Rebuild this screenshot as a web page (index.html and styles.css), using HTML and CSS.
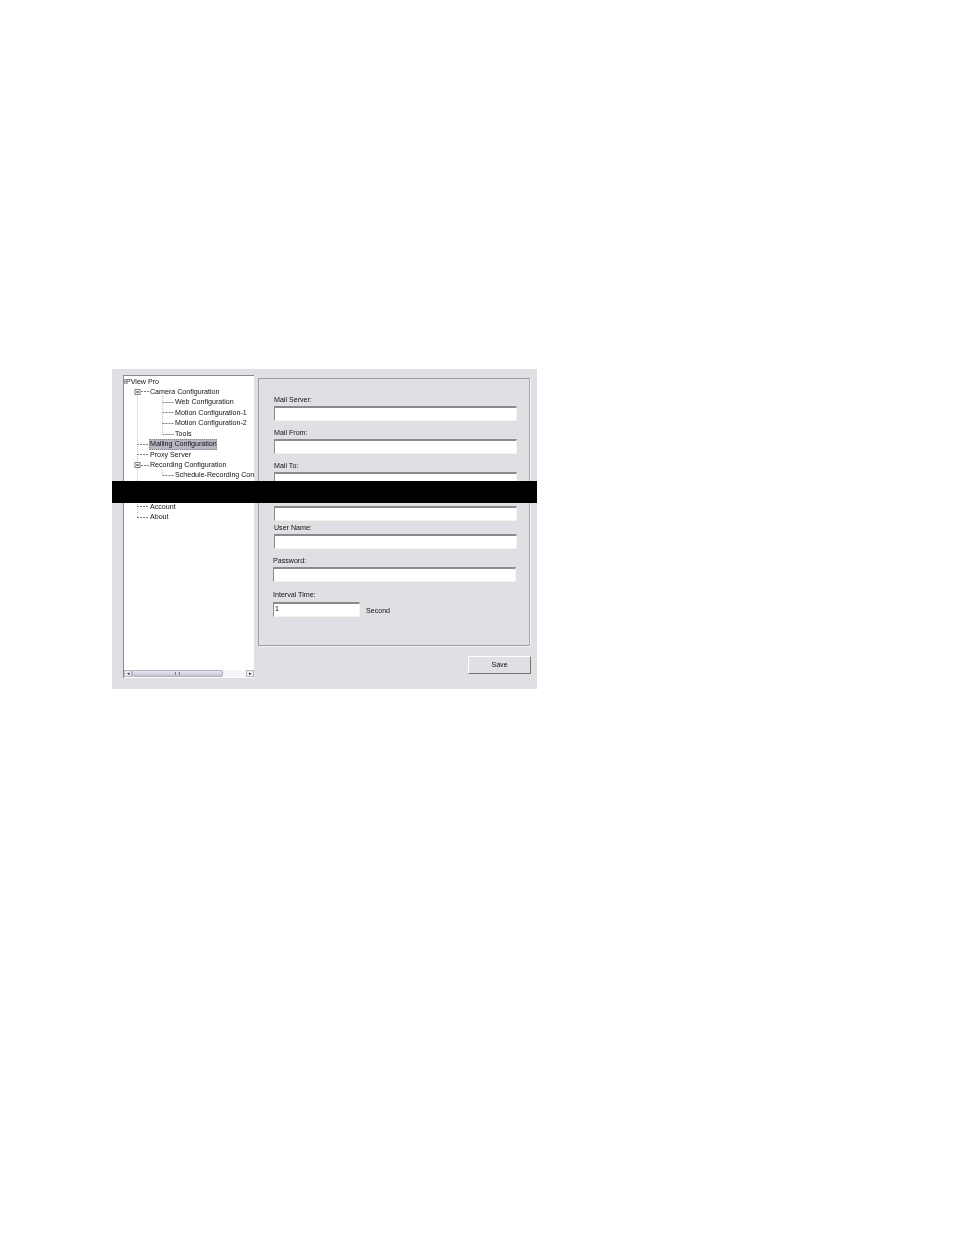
FILE: index.html
```html
<!DOCTYPE html>
<html lang="en">
<head>
    <meta charset="UTF-8">
    <title>IPView Pro</title>
    <link rel="stylesheet" href="styles.css">
</head>
<body>
    <div class="window">
        <div class="tree">
            <div class="tree-rows">
                <div class="row lvl0">IPView Pro</div>
                <div class="row lvl1">Camera Configuration</div>
                <div class="row lvl2">Web Configuration</div>
                <div class="row lvl2">Motion Configuration-1</div>
                <div class="row lvl2">Motion Configuration-2</div>
                <div class="row lvl2">Tools</div>
                <div class="row lvl1"><span class="selected">Mailing Configuration</span></div>
                <div class="row lvl1">Proxy Server</div>
                <div class="row lvl1">Recording Configuration</div>
                <div class="row lvl2">Schedule-Recording Con</div>
                <div class="row"></div>
                <div class="row"></div>
                <div class="row lvl1">Account</div>
                <div class="row lvl1">About</div>
            </div>
            <svg class="tree-lines" width="130" height="150" viewBox="0 0 130 150">
                <g stroke="#c4c4c4" stroke-width="1" stroke-dasharray="1 1" fill="none">
                    <path d="M13.5 20V141"/>
                    <path d="M38.5 20V58"/>
                    <path d="M38.5 94V100"/>
                </g>
                <g stroke="#7c7c7c" stroke-width="1" stroke-dasharray="2 1" fill="none">
                    <path d="M17 15.5H25"/>
                    <path d="M38.5 26.5H50"/>
                    <path d="M38.5 36.5H50"/>
                    <path d="M38.5 47.5H50"/>
                    <path d="M38.5 58.5H50"/>
                    <path d="M13 68.5H25"/>
                    <path d="M13 78.5H25"/>
                    <path d="M17 89.5H25"/>
                    <path d="M38.5 99.5H50"/>
                    <path d="M13 130.5H25"/>
                    <path d="M13 141.5H25"/>
                </g>
                <g stroke="#808080" fill="#fff">
                    <rect x="11" y="13.5" width="5" height="5"/>
                    <rect x="11" y="86.5" width="5" height="5"/>
                </g>
                <path d="M12 16H15M12 89H15" stroke="#222"/>
            </svg>
            <div class="hscroll">
                <div class="arrow">&#9666;</div>
                <div class="thumb"><span class="grip"></span></div>
                <div class="track"></div>
                <div class="arrow">&#9656;</div>
            </div>
        </div>
        <div class="right">
            <div class="group">
                <div class="field">
                    <label>Mail Server:</label>
                    <div class="input"></div>
                </div>
                <div class="field">
                    <label>Mail From:</label>
                    <div class="input"></div>
                </div>
                <div class="field gap-wide">
                    <label>Mail To:</label>
                    <div class="input"></div>
                </div>
                <div class="field gap-tight">
                    <label></label>
                    <div class="input"></div>
                </div>
                <div class="field">
                    <label>User Name:</label>
                    <div class="input"></div>
                </div>
                <div class="field gap-wide2">
                    <label class="shift">Password:</label>
                    <div class="input shift"></div>
                </div>
                <div class="field">
                    <label class="shift">Interval Time:</label>
                    <div class="interval">
                        <div class="input short">1</div>
                        <span class="unit">Second</span>
                    </div>
                </div>
            </div>
            <div class="actions">
                <div class="btn">Save</div>
            </div>
        </div>
        <div class="redact"></div>
    </div>
</body>
</html>
```

FILE: styles.css
```css
body {
    margin: 0;
    background-color: #fff;
    font-family: "Liberation Sans", Arial, sans-serif;
    font-size: 7.1px;
    color: #111;
    padding: 369px 0 0 112px;
}
.window {
    position: relative;
    width: 425px;
    height: 320px;
    background-color: #e0dfe3;
    display: flex;
    box-sizing: border-box;
    padding: 6px 7px 0 11px;
}
.tree {
    position: relative;
    width: 131px;
    height: 303px;
    box-sizing: border-box;
    background-color: #fff;
    border-top: 1px solid #8a8a8a;
    border-left: 1px solid #8a8a8a;
    display: flex;
    flex-direction: column;
    overflow: hidden;
    filter: blur(0.35px);
}
.tree-rows {
    flex: 1;
    padding-top: 0.5px;
}
.row {
    height: 10.45px;
    line-height: 10.45px;
    white-space: nowrap;
}
.lvl1 {
    padding-left: 26px;
}
.lvl2 {
    padding-left: 51px;
}
.selected {
    display: inline-block;
    margin-left: -1px;
    padding-left: 1px;
    background-color: #b8b8c4;
    outline: 1px dotted #888;
    outline-offset: -1px;
    color: #111;
}
.tree-lines {
    position: absolute;
    top: 0;
    left: 0;
}
.hscroll {
    height: 7px;
    display: flex;
    margin-bottom: 1px;
    background-color: #f6f6f8;
}
.arrow {
    width: 8px;
    background-color: #eeeef0;
    border: 1px solid #b4b4bc;
    box-sizing: border-box;
    font-size: 5px;
    line-height: 5px;
    text-align: center;
    color: #222;
}
.thumb {
    width: 91px;
    box-sizing: border-box;
    background: linear-gradient(#e6e6ee, #c4c6d4);
    border: 1px solid #b0b0bc;
    border-radius: 2px;
    display: flex;
    justify-content: center;
    align-items: center;
}
.grip {
    width: 3px;
    height: 3px;
    border-left: 1px solid #777;
    border-right: 1px solid #777;
}
.track {
    flex: 1;
}
.right {
    margin-left: 4px;
    flex: 1;
    display: flex;
    flex-direction: column;
}
.group {
    margin-top: 3px;
    height: 268px;
    box-sizing: border-box;
    border: 1px solid #9c9ca2;
    border-right-color: #a8a8ae;
    box-shadow: 1px 1px 0 #f4f4f6;
    padding: 15px 12px 0 15px;
    filter: blur(0.35px);
}
.field {
    margin-bottom: 6px;
}
.field label {
    display: block;
    height: 12px;
    line-height: 13px;
}
.input {
    width: 243px;
    height: 15px;
    box-sizing: border-box;
    background-color: #fff;
    border-top: 2px solid #8a8a8a;
    border-left: 1px solid #8a8a8a;
    border-bottom: 1px solid #f4f4ea;
    border-right: 1px solid #f4f4ea;
    line-height: 11px;
}
.gap-wide {
    margin-bottom: 7px;
}
.gap-tight {
    margin-bottom: 1px;
}
.gap-wide2 {
    margin-bottom: 7px;
}
.shift {
    margin-left: -1px;
}
.interval {
    display: flex;
    align-items: center;
    margin-top: 1px;
}
.input.short {
    width: 87px;
    margin-left: -1px;
    padding-left: 1px;
}
.unit {
    margin-left: 6px;
    padding-top: 3px;
}
.actions {
    display: flex;
    justify-content: flex-end;
    margin-top: 10px;
    margin-right: -1px;
}
.btn {
    width: 63px;
    height: 18px;
    box-sizing: border-box;
    background-color: #e0dfe3;
    border-top: 1px solid #fff;
    border-left: 1px solid #fff;
    border-right: 1px solid #777;
    border-bottom: 1px solid #777;
    text-align: center;
    line-height: 16px;
    filter: blur(0.35px);
}
.redact {
    position: absolute;
    left: 0;
    right: 0;
    top: 112px;
    height: 22px;
    background-color: #000;
}
```
